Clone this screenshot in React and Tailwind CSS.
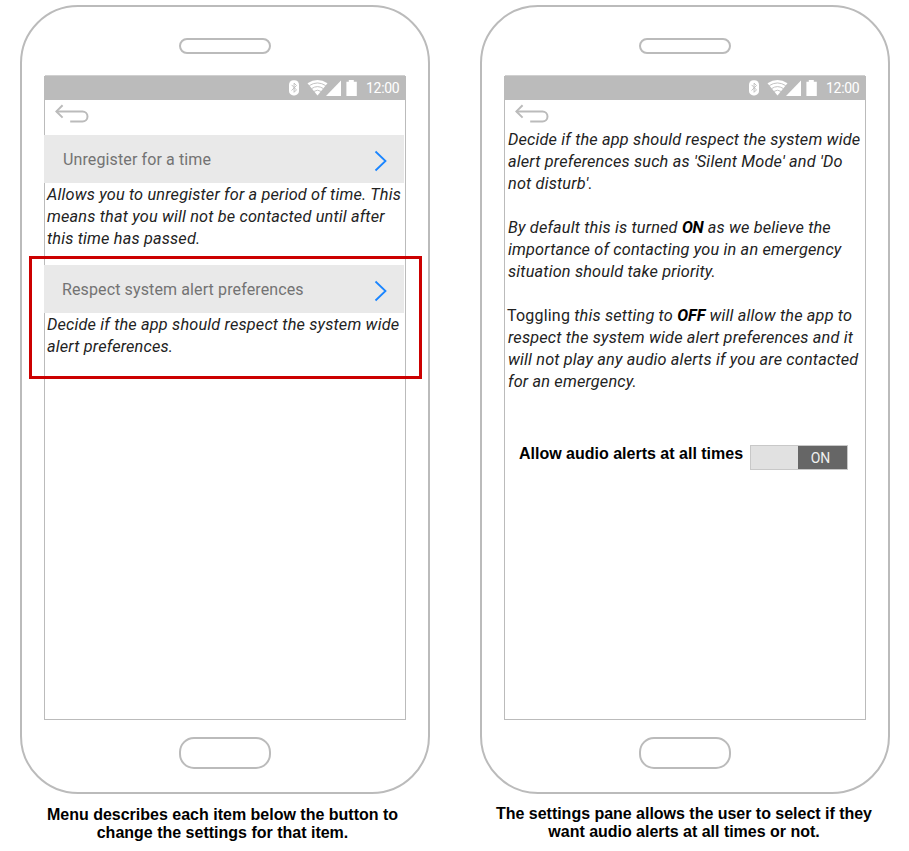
import React from "react";

function StatusIcons() {
  return (
    <svg width="70" height="18" viewBox="0 0 70 18" className="block">
      <rect x="1" y="1.2" width="10" height="15.2" rx="4.4" fill="#fff" />
      <path d="M3.6 5.9l4.9 5-2.4 2.4V4.1l2.4 2.4-4.9 5" fill="none" stroke="#bbb" strokeWidth="0.9" />
      <path d="M29.5 16.4L19.5 4.3Q29.5 -2.5 39.5 4.3Z" fill="#fff" />
      <path d="M21.3 6.6Q29.5 1.3 37.7 6.6M23.6 9.6Q29.5 5.6 35.4 9.6M26 12.4Q29.5 10 33 12.4" fill="none" stroke="#bbb" strokeWidth="0.9" />
      <path d="M38 17L53 1.5V17Z" fill="#fff" />
      <path d="M58.4 2.8h2.4V1h5V2.8h3V17H58.4Z" fill="#fff" />
    </svg>
  );
}

function BackArrow() {
  return (
    <svg width="36" height="20" viewBox="0 0 36 20" className="ml-[10px] block">
      <path d="M7.6 1.2L1.4 7.4L7.6 13.6" fill="none" stroke="#bbb" strokeWidth="2" />
      <path d="M1.5 7.4H27.5A5 5 0 0 1 27.5 17.4H15.2" fill="none" stroke="#bbb" strokeWidth="2" />
    </svg>
  );
}

function Phone({ children }) {
  return (
    <div className="flex h-[789px] w-[410px] flex-col items-center rounded-[58px] border-2 border-[#bbbbbb]">
      <div className="mt-[31px] h-[16px] w-[92px] shrink-0 rounded-full border-2 border-[#bbbbbb]" />
      <div className="mt-[22px] h-[644px] w-[362px] shrink-0 border border-[#bbbbbb]">
        <div className="-mt-[2px] flex h-[25px] items-center justify-end border-t border-[#d0d0d0] bg-[#bbbbbb] pr-[5px]">
          <StatusIcons />
          <span className="ml-[8px] w-[34px] text-[14px] leading-[22px] tracking-[-0.3px] whitespace-nowrap text-white">12:00</span>
        </div>
        <div className="pt-[4px]">
          <BackArrow />
        </div>
        {children}
      </div>
      <div className="mt-[17px] h-[32px] w-[92px] shrink-0 rounded-[15px] border-2 border-[#bbbbbb]" />
    </div>
  );
}

function MenuItem({ label, pad, children }) {
  return (
    <div>
      <div className={`-ml-px flex h-[48px] w-[360px] items-center justify-between bg-[#e9e9e9] pr-[17px] ${pad}`}>
        <span className="mt-[2px] text-[16px] leading-[22px] tracking-[0.12px] text-[#737373]">{label}</span>
        <svg width="13" height="22" viewBox="0 0 13 22" className="mt-[4px] block">
          <path d="M1.5 1.5L11.5 11L1.5 20.5" fill="none" stroke="#1a85ff" strokeWidth="1.8" />
        </svg>
      </div>
      <p className="pt-px pl-[2px] text-[16.3px] leading-[22px] tracking-[0.17px] whitespace-nowrap text-[#222] italic">{children}</p>
    </div>
  );
}

function Caption({ children, className }) {
  return (
    <p className={`text-center font-['Liberation_Sans',sans-serif] text-[16px] leading-[18px] font-bold whitespace-nowrap text-black ${className}`}>
      {children}
    </p>
  );
}

export default function App() {
  return (
    <div className="relative flex h-[851px] w-[909px] gap-[50px] overflow-hidden bg-white pt-[5px] pl-[20px] font-['Roboto',sans-serif]">
      <div className="w-[410px]">
        <Phone>
          <div className="mt-[11px] flex flex-col gap-[15px]">
            <MenuItem label="Unregister for a time" pad="pl-[19px]">
              Allows you to unregister for a period of time. This<br />
              means that you will not be contacted until after<br />
              this time has passed.
            </MenuItem>
            <MenuItem label="Respect system alert preferences" pad="pl-[18px]">
              Decide if the app should respect the system wide<br />
              alert preferences.
            </MenuItem>
          </div>
        </Phone>
        <Caption className="mt-[12px] pr-[5px]">
          Menu describes each item below the button to<br />
          change the settings for that item.
        </Caption>
      </div>
      <div className="w-[410px]">
        <Phone>
          <div className="mt-[5px] flex flex-col gap-[22px] pl-[3px] text-[16.3px] leading-[22px] tracking-[0.17px] whitespace-nowrap text-[#222] italic">
            <p>
              Decide if the app should respect the system wide<br />
              alert preferences such as 'Silent Mode' and 'Do<br />
              not disturb'.
            </p>
            <p>
              By default this is turned <b className="tracking-[-0.2px] text-black">ON</b> as we believe the<br />
              importance of contacting you in an emergency<br />
              situation should take priority.
            </p>
            <p>
              <span className="-ml-px text-[16px] tracking-[0.2px] not-italic">Toggling</span> this setting to <b className="tracking-normal text-black">OFF</b> will allow the app to<br />
              respect the system wide alert preferences and it<br />
              will not play any audio alerts if you are contacted<br />
              for an emergency.
            </p>
          </div>
          <div className="mt-[52px] flex pl-[14px]">
            <span className="w-[231px] font-['Liberation_Sans',sans-serif] text-[16px] leading-[18px] font-bold whitespace-nowrap text-black">
              Allow audio alerts at all times
            </span>
            <div className="flex h-[25px] w-[98px] border border-[#c8c8c8] bg-[#e1e1e1]">
              <div className="ml-auto flex w-[49px] items-center justify-center bg-[#666666] pt-px pr-[4px] text-[14px] text-[#f0f0f0]">ON</div>
            </div>
          </div>
        </Phone>
        <Caption className="mt-[11px] pr-[2px] tracking-[-0.02px]">
          The settings pane allows the user to select if they<br />
          want audio alerts at all times or not.
        </Caption>
      </div>
      <div className="absolute top-[256px] left-[29px] h-[123px] w-[393px] border-3 border-[#cc0000]" />
    </div>
  );
}
